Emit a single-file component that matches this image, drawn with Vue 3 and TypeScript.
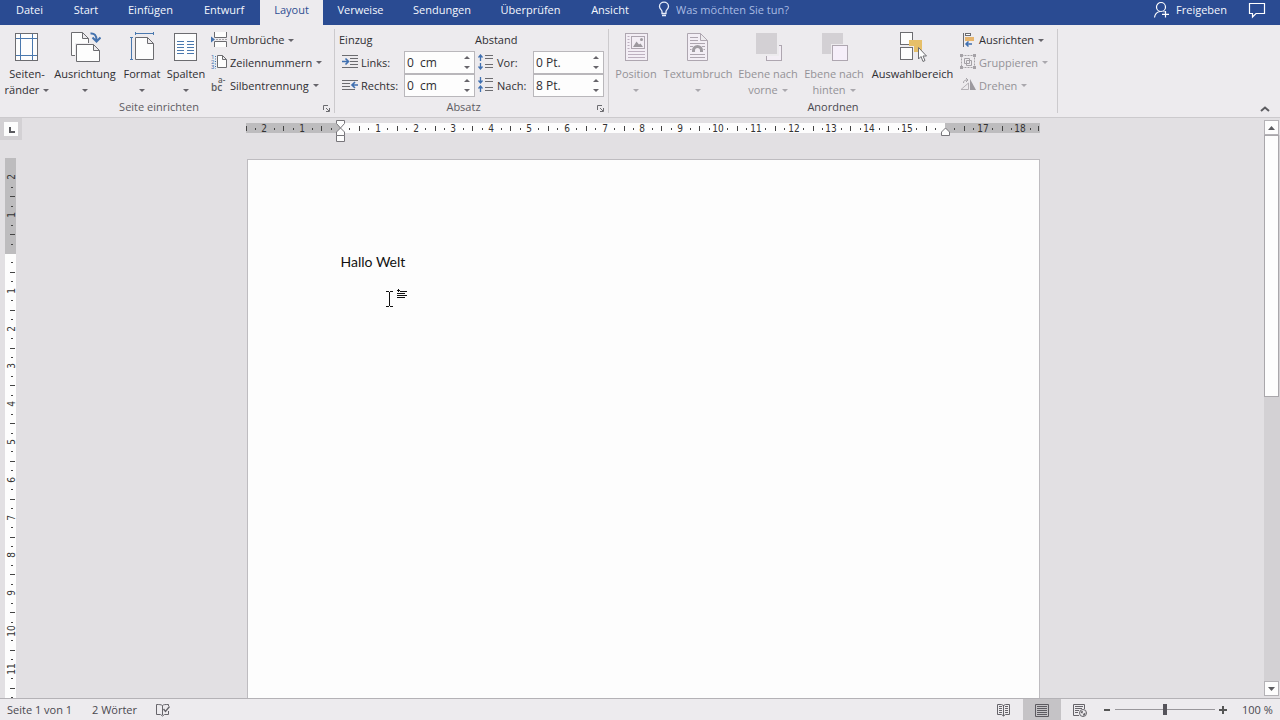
<script setup lang="ts">
import { ref } from 'vue'

const tabs = ['Datei', 'Start', 'Einfügen', 'Entwurf', 'Layout', 'Verweise', 'Sendungen', 'Überprüfen', 'Ansicht']
const activeTab = ref('Layout')

const indentLeft = ref('0  cm')
const indentRight = ref('0  cm')
const spaceBefore = ref('0 Pt.')
const spaceAfter = ref('8 Pt.')
const zoom = ref(50)
const question = ref('')

interface Mark {
  pos: number
  kind: 'num' | 'half' | 'dot'
  label: string
}

const CM = 37.8

// Ruler marks in quarter-centimetre steps around the zero point.
function marks(zero: number, from: number, to: number, skip: number[]): Mark[] {
  const out: Mark[] = []
  for (let q = from; q <= to; q++) {
    if (q === 0) continue
    const pos = Math.round(zero + (q * CM) / 4)
    if (q % 4 === 0) {
      const n = Math.abs(q / 4)
      if (!skip.includes(n)) out.push({ pos, kind: 'num', label: String(n) })
    } else {
      out.push({ pos, kind: q % 2 === 0 ? 'half' : 'dot', label: '' })
    }
  }
  return out
}

const horizontal = marks(94, -9, 73, [16])
const vertical = marks(95, -8, 47, [])
</script>

<template>
  <div class="word">
    <header class="tabbar">
      <nav class="tabs">
        <button
          v-for="t in tabs"
          :key="t"
          type="button"
          class="tab"
          :class="{ active: t === activeTab }"
          @click="activeTab = t"
        >{{ t }}</button>
      </nav>
      <label class="tell">
        <svg width="14" height="18" viewBox="0 0 14 18" fill="none" stroke="#e8eefb" stroke-width="1.3">
          <path d="M5 12.5V10.5C5 9 2.5 8 2.5 5.5a4.5 4.3 0 0 1 9 0C11.500 8 9 9 9 10.500V12.500ZM5 14.500H9" />
        </svg>
        <input v-model="question" type="text" placeholder="Was möchten Sie tun?" aria-label="Was möchten Sie tun?" />
      </label>
      <button type="button" class="share">
        <svg width="18" height="18" viewBox="0 0 18 18" fill="none" stroke="#fff" stroke-width="1.2">
          <circle cx="8" cy="6" r="4.500" />
          <path d="M1.500 16.500C2 13 4 11 7 10.500M10.500 10.500L11.500 11M12.500 10V16.500M9 13.300H16" />
        </svg>
        <span>Freigeben</span>
      </button>
      <button type="button" class="comment" aria-label="Kommentare">
        <svg width="18" height="18" viewBox="0 0 18 18" fill="none" stroke="#fff" stroke-width="1.2">
          <path d="M1.500 2.500H16.500V12.500H8L4.500 16V12.500H1.500Z" />
        </svg>
      </button>
    </header>

    <section class="ribbon">
      <div class="group page-setup">
        <div class="body">
          <button type="button" class="big">
            <svg width="32" height="32" viewBox="0 0 32 32" fill="none">
              <rect x="4.500" y="2.500" width="22" height="27" fill="#fdfdfd" stroke="#6c6c70" />
              <path d="M9.500 3V29M21.500 3V29M5 7.500H26M5 24.500H26" stroke="#4a78ae" />
            </svg>
            <span>Seiten-</span>
            <span>ränder<i class="caret"></i></span>
          </button>
          <button type="button" class="big">
            <svg width="32" height="32" viewBox="0 0 32 32" fill="#fdfdfd" stroke="#6c6c70">
              <path d="M2.500 1.500H13.500L19.500 7.500V24.500H2.500ZM13.500 1.500V7.500H19.500" />
              <path d="M6 12H25V15L31 20V31H6Z" fill="#edebee" stroke="none" />
              <path d="M7.500 13.500H24.500L30.500 19.500V30.500H7.500ZM24.500 13.500V19.500H30.500" />
              <path d="M21.500 2.500C25.500 2 27.500 4.500 27.500 9M23.500 6.500L27.500 10.500L31.500 6.500" fill="none" stroke="#4472ae" stroke-width="2" />
            </svg>
            <span>Ausrichtung</span>
            <span><i class="caret solo"></i></span>
          </button>
          <button type="button" class="big">
            <svg width="32" height="32" viewBox="0 0 32 32" fill="#fdfdfd" stroke="#6c6c70">
              <path d="M9.500 6.500H21.500L27.500 12.500V28.500H9.500ZM21.500 6.500V12.500H27.500" />
              <path d="M9.500 1V4M27.500 1V4M9.500 2.500H27.500M4 6.500H7M4 28.500H7M5.500 6.500V28.500" stroke="#4a78ae" />
            </svg>
            <span>Format</span>
            <span><i class="caret solo"></i></span>
          </button>
          <button type="button" class="big">
            <svg width="32" height="32" viewBox="0 0 32 32" fill="none">
              <rect x="4.500" y="2.500" width="22" height="27" fill="#fdfdfd" stroke="#6c6c70" />
              <path d="M7 10.500H14M7 13.500H14M7 16.500H14M7 19.500H14M7 22.500H14M17 10.500H24M17 13.500H24M17 16.500H24M17 19.500H24M17 22.500H24" stroke="#4a78ae" />
            </svg>
            <span>Spalten</span>
            <span><i class="caret solo"></i></span>
          </button>
          <div class="stack">
            <button type="button" class="small">
              <svg width="17" height="17" viewBox="0 0 17 17" fill="#fdfdfd" stroke="#6c6c70">
                <path d="M3.500 0V5.500H15.500V0M3.500 15V9.500H15.500V15" />
                <path d="M5 7.500H16" stroke="#a5a3a8" stroke-dasharray="2 1" />
                <path d="M0 4.500L4 7.500L0 10.500Z" fill="#4472ae" stroke="none" />
              </svg>
              <span>Umbrüche</span><i class="caret"></i>
            </button>
            <button type="button" class="small">
              <svg width="17" height="17" viewBox="0 0 17 17" fill="#fdfdfd" stroke="#6c6c70">
                <path d="M6.500 1.500H11.500L15.500 5.500V13.500H6.500ZM11.500 1.500V5.500H15.500" />
                <g fill="#4472ae" stroke="none" font-size="6" font-family="Roboto, sans-serif">
                  <text x="0" y="5">1</text>
                  <text x="0" y="10">2</text>
                  <text x="0" y="15">3</text>
                </g>
                <path d="M4.500 2V15" stroke="#4472ae" stroke-dasharray="1 1.500" />
              </svg>
              <span>Zeilennummern</span><i class="caret"></i>
            </button>
            <button type="button" class="small">
              <svg class="hyphen" width="17" height="17" viewBox="0 0 17 17">
                <text x="0" y="14" font-size="10">bc</text>
                <text x="7" y="6" font-size="8">a-</text>
              </svg>
              <span>Silbentrennung</span><i class="caret"></i>
            </button>
          </div>
        </div>
        <footer class="caption">
          <span>Seite einrichten</span>
          <button type="button" class="launcher" aria-label="Seite einrichten öffnen">
            <svg width="7" height="7" viewBox="0 0 7 7" fill="none" stroke="#6c6c70"><path d="M.5 5V.5H5M3 3L6 6M6.500 3V6.500H3" /></svg>
          </button>
        </footer>
      </div>

      <div class="group paragraph">
        <div class="fields">
          <span class="head">Einzug</span>
          <span class="head">Abstand</span>

          <label class="name" for="in-left">
            <svg width="17" height="17" viewBox="0 0 17 17" fill="none" stroke="#6c6c70">
              <path d="M0 1.500H16M8 4.500H16M8 7.500H16M8 10.500H16M0 13.500H16" />
              <path d="M0 7.500H6M3.500 4.500L6.500 7.500L3.500 10.500" stroke="#3f6fb0" stroke-width="1.600" />
            </svg>Links:
          </label>
          <span class="spin">
            <input id="in-left" v-model="indentLeft" type="text" />
            <span class="arrows"><button type="button" aria-label="Links erhöhen" class="up"></button><button type="button" aria-label="Links verringern" class="down"></button></span>
          </span>
          <label class="name second" for="sp-before">
            <svg width="17" height="17" viewBox="0 0 17 17" fill="none" stroke="#6c6c70">
              <path d="M7 1.500H15M7 4.500H15M7 10.500H15M7 13.500H15" />
              <path d="M2.500 1V7M.5 3.500L2.500 1L4.500 3.500M2.500 9V15M.5 12.500L2.500 15L4.500 12.500" stroke="#3f6fb0" stroke-width="1.300" />
            </svg>Vor:
          </label>
          <span class="spin">
            <input id="sp-before" v-model="spaceBefore" type="text" />
            <span class="arrows"><button type="button" aria-label="Vor erhöhen" class="up"></button><button type="button" aria-label="Vor verringern" class="down"></button></span>
          </span>

          <label class="name" for="in-right">
            <svg width="17" height="17" viewBox="0 0 17 17" fill="none" stroke="#6c6c70">
              <path d="M0 3.500H16M0 6.500H8M0 9.500H8M0 12.500H13" />
              <path d="M16 8H10M13 5L10 8L13 11" stroke="#3f6fb0" stroke-width="1.600" />
            </svg>Rechts:
          </label>
          <span class="spin">
            <input id="in-right" v-model="indentRight" type="text" />
            <span class="arrows"><button type="button" aria-label="Rechts erhöhen" class="up"></button><button type="button" aria-label="Rechts verringern" class="down"></button></span>
          </span>
          <label class="name second" for="sp-after">
            <svg width="17" height="17" viewBox="0 0 17 17" fill="none" stroke="#6c6c70">
              <path d="M7 1.500H15M7 4.500H15M7 10.500H15M7 13.500H15" />
              <path d="M2.500 0V6M.5 3.500L2.500 6L4.500 3.500M2.500 9V15M.5 11.500L2.500 9L4.500 11.500" stroke="#3f6fb0" stroke-width="1.300" />
            </svg>Nach:
          </label>
          <span class="spin">
            <input id="sp-after" v-model="spaceAfter" type="text" />
            <span class="arrows"><button type="button" aria-label="Nach erhöhen" class="up"></button><button type="button" aria-label="Nach verringern" class="down"></button></span>
          </span>
        </div>
        <footer class="caption">
          <span>Absatz</span>
          <button type="button" class="launcher" aria-label="Absatz öffnen">
            <svg width="7" height="7" viewBox="0 0 7 7" fill="none" stroke="#6c6c70"><path d="M.5 5V.5H5M3 3L6 6M6.500 3V6.500H3" /></svg>
          </button>
        </footer>
      </div>

      <div class="group arrange">
        <div class="body">
          <button type="button" class="big off" disabled>
            <svg width="32" height="32" viewBox="0 0 32 32" fill="none" stroke="#aea6b0">
              <rect x="5.500" y="2.500" width="22" height="27" fill="#f3eef5" />
              <rect x="11.500" y="5.500" width="13" height="12" />
              <path d="M7.500 5.500H9.500M7.500 8.500H9.500M7.500 11.500H9.500M7.500 14.500H9.500M7.500 17.500H9.500M8 20.500H25M8 23.500H25M8 26.500H25" stroke="#bdb0bf" />
              <path d="M13 16L16.500 10.500L19 13.500L20.500 12.500L23 16Z" fill="#9d999f" stroke="none" />
              <circle cx="21.500" cy="8.500" r="1.500" fill="#9d999f" stroke="none" />
            </svg>
            <span>Position</span>
            <span><i class="caret solo"></i></span>
          </button>
          <button type="button" class="big off" disabled>
            <svg width="32" height="32" viewBox="0 0 32 32" fill="none" stroke="#aea6b0">
              <path d="M5.500 2.500H18.500L25.500 9.500V29.500H5.500ZM18.500 2.500V9.500H25.500" fill="#f3eef5" />
              <path d="M8 6.500H16M8 9.500H16M8 12.500H23M8 15.500H11M20 15.500H23M8 18.500H9.500M21.500 18.500H23M8 23.500H23M8 26.500H23" />
              <path d="M11.500 21V19.500A4 4 0 0 1 19.500 19.500V21" stroke="#a09ca2" stroke-width="3" />
            </svg>
            <span>Textumbruch</span>
            <span><i class="caret solo"></i></span>
          </button>
          <button type="button" class="big off" disabled>
            <svg width="32" height="32" viewBox="0 0 32 32">
              <rect x="14.500" y="14.500" width="15" height="15" fill="#f3eef5" stroke="#aea6b0" />
              <path d="M3 1H27V25H3Z" fill="#edebee" />
              <rect x="4" y="2" width="21" height="21" fill="#d3d0d4" />
            </svg>
            <span>Ebene nach</span>
            <span>vorne<i class="caret"></i></span>
          </button>
          <button type="button" class="big off" disabled>
            <svg width="32" height="32" viewBox="0 0 32 32">
              <rect x="4" y="2" width="21" height="21" fill="#d3d0d4" />
              <rect x="13" y="13" width="18" height="18" fill="#edebee" />
              <rect x="14.500" y="14.500" width="15" height="15" fill="#f6effa" stroke="#aea6b0" />
            </svg>
            <span>Ebene nach</span>
            <span>hinten<i class="caret"></i></span>
          </button>
          <button type="button" class="big">
            <svg width="32" height="32" viewBox="0 0 32 32" fill="#fdfdfd" stroke="#6c6c70">
              <rect x="3.500" y="1.500" width="12" height="12" />
              <path d="M12 9H25V21H17V15H12Z" fill="#e6bf68" stroke="none" />
              <rect x="3.500" y="16.500" width="12" height="12" />
              <path d="M21.500 16.500V28L24 25.500L26 30.500L28 29.500L26 25H29.500Z" />
            </svg>
            <span>Auswahlbereich</span>
          </button>
          <div class="stack">
            <button type="button" class="small">
              <svg width="17" height="17" viewBox="0 0 17 17" fill="none" stroke="#6c6c70">
                <path d="M3.500 1V15" />
                <rect x="5.500" y="1.500" width="5" height="2" fill="#fdfdfd" />
                <rect x="5" y="5" width="9" height="4" fill="#e6b46c" stroke="none" />
                <path d="M12 12H6M8.500 9.500L6 12L8.500 14.500" stroke="#3f6fb0" stroke-width="1.500" />
              </svg>
              <span>Ausrichten</span><i class="caret"></i>
            </button>
            <button type="button" class="small off" disabled>
              <svg width="17" height="17" viewBox="0 0 17 17" fill="none" stroke="#a5a2a7">
                <path d="M1.500 1.500H14.500V13.500H1.500Z" stroke-dasharray="2 1" />
                <path d="M4.500 4.500H9.500V9.500H4.500ZM6.500 6.500H11.500V11.500H6.500Z" />
                <path d="M0 0H3V3H0ZM13 0H16V3H13ZM0 12H3V15H0ZM13 12H16V15H13Z" fill="#a5a2a7" stroke="none" />
              </svg>
              <span>Gruppieren</span><i class="caret"></i>
            </button>
            <button type="button" class="small off" disabled>
              <svg width="17" height="17" viewBox="0 0 17 17" fill="none" stroke="#b5b2b7">
                <path d="M1 12.500L8.500 6V12.500Z" />
                <path d="M10 2V13H16Z" fill="#9c999e" stroke="none" />
                <path d="M3.500 6C3.500 3.500 5 3 7.500 3M6 1L8 3L6 5" stroke="#a5a2a7" />
              </svg>
              <span>Drehen</span><i class="caret"></i>
            </button>
          </div>
        </div>
        <footer class="caption strong"><span>Anordnen</span></footer>
      </div>
      <button type="button" class="collapse" aria-label="Menüband reduzieren">
        <svg width="10" height="6" viewBox="0 0 10 6" fill="none" stroke="#5c5c60" stroke-width="2"><path d="M1 5L5 1.500L9 5" /></svg>
      </button>
    </section>

    <main class="workspace">
      <aside class="side">
        <button type="button" class="corner" aria-label="Tabstopp">
          <svg width="14" height="14" viewBox="0 0 14 14"><path d="M6 5V10H11" fill="none" stroke="#5c5c60" stroke-width="2" /></svg>
        </button>
        <div class="vruler">
          <svg width="11" height="540" viewBox="0 0 11 540">
            <rect width="11" height="540" fill="#fdfdfd" />
            <rect width="11" height="96" fill="#bdbcbe" />
            <template v-for="(m, i) in vertical" :key="i">
              <text v-if="m.kind === 'num'" class="mark" :transform="`translate(10 ${m.pos}) rotate(-90)`">{{ m.label }}</text>
              <rect v-else-if="m.kind === 'half'" x="5" :y="m.pos" width="5" height="1" fill="#444" />
              <rect v-else x="6" :y="m.pos" width="2" height="1" fill="#444" />
            </template>
          </svg>
        </div>
      </aside>

      <div class="canvas">
        <svg class="hruler" width="794" height="24" viewBox="0 0 794 24">
          <rect y="5" width="794" height="10" fill="#bdbcbe" />
          <rect x="94" y="5" width="605" height="10" fill="#fdfdfd" />
          <rect x="0" y="8" width="1" height="5" fill="#444" />
          <rect x="792" y="8" width="1" height="5" fill="#444" />
          <template v-for="(m, i) in horizontal" :key="i">
            <text v-if="m.kind === 'num'" class="mark" :x="m.pos" y="14">{{ m.label }}</text>
            <rect v-else-if="m.kind === 'half'" :x="m.pos" y="8" width="1" height="5" fill="#444" />
            <rect v-else :x="m.pos" y="10" width="1" height="2" fill="#444" />
          </template>
          <g fill="#fdfdfd" stroke="#77757a">
            <path d="M90.500 2.500H98.500V5.500L94.500 10L90.500 5.500Z" />
            <path d="M94.500 10L98.500 14V17.500H90.500V14Z" />
            <path d="M90.500 17.500H98.500V23.500H90.500Z" />
            <path d="M699.500 10L703.500 14V17.500H695.500V14Z" />
          </g>
        </svg>
        <article class="page">
          <p>Hallo Welt</p>
          <svg class="cursor" width="20" height="20" viewBox="0 0 20 20" fill="none" stroke="#111">
            <path d="M0 3.500H3M4 3.500H7M3.500 4V18M0 18.500H3M4 18.500H7" />
            <path d="M11 2.500H14M12.500 1V4M14 3.500H21M11 5.500H19M11 7.500H21M11 9.500H19" />
          </svg>
        </article>
      </div>

      <div class="scroll">
        <button type="button" aria-label="Nach oben"><svg width="7" height="4" viewBox="0 0 7 4"><path d="M0 4L3.500 0L7 4Z" fill="#5c5c60" /></svg></button>
        <div class="track"><div class="thumb"></div></div>
        <button type="button" aria-label="Nach unten"><svg width="7" height="4" viewBox="0 0 7 4"><path d="M0 0L3.500 4L7 0Z" fill="#5c5c60" /></svg></button>
      </div>
    </main>

    <footer class="status">
      <span class="pages">Seite 1 von 1</span>
      <span class="words">2 Wörter</span>
      <button type="button" class="proof" aria-label="Rechtschreibung">
        <svg width="16" height="14" viewBox="0 0 16 14" fill="none" stroke="#66646a">
          <path d="M7.500 2.500C6 1.500 4 1.500 1.500 1.500V11.500H5.500L7.500 13L9.500 11.500H13.500V8M7.500 2.500V12M7.500 2.500C8.500 1.500 10 1.500 13.500 1.500V3" />
          <path d="M8.500 6L10.500 8.500L14.500 3.500" stroke-width="1.400" />
        </svg>
      </button>
      <button type="button" class="view" aria-label="Lesemodus">
        <svg width="14" height="14" viewBox="0 0 14 14" fill="none" stroke="#66646a">
          <path d="M.5 1.500H4.500L6.500 2.500L8.500 1.500H12.500V11.500H8.500L6.500 13L4.500 11.500H.5ZM6.500 2V13M2 3.500H5M2 5.500H5M2 7.500H5M2 9.500H5M8 3.500H11M8 5.500H11M8 7.500H11M8 9.500H11" />
        </svg>
      </button>
      <button type="button" class="view on" aria-label="Seitenlayout">
        <svg width="14" height="14" viewBox="0 0 14 14" fill="none" stroke="#5c5a60">
          <path d="M.5 1.500H13.500V13.500H.5ZM2 3.500H12M2 5.500H12M2 7.500H12M2 9.500H12M2 11.500H12" />
        </svg>
      </button>
      <button type="button" class="view" aria-label="Weblayout">
        <svg width="14" height="14" viewBox="0 0 14 14" fill="none" stroke="#66646a">
          <path d="M6 12.500H.5V1.500H11.500V6M2 3.500H10M2 5.500H9M2 7.500H6M2 9.500H5" />
          <circle cx="10" cy="10" r="3.500" fill="#edebee" />
          <path d="M7.500 8.500L10 8L9.500 10.500L8 10ZM10 11L12.500 9.500L12 12L10.500 13Z" fill="#66646a" stroke="none" />
        </svg>
      </button>
      <div class="zoom">
        <button type="button" aria-label="Verkleinern"><svg width="8" height="8" viewBox="0 0 8 8"><path d="M1 4H7" stroke="#555" stroke-width="2" /></svg></button>
        <input v-model="zoom" type="range" min="0" max="100" aria-label="Zoom" />
        <button type="button" aria-label="Vergrößern"><svg width="8" height="8" viewBox="0 0 8 8"><path d="M0 4H8M4 0V8" stroke="#555" stroke-width="2" /></svg></button>
      </div>
      <span class="percent">100 %</span>
    </footer>
  </div>
</template>

<style>
body {
  margin: 0;
}
</style>

<style scoped>
.word {
  display: flex;
  flex-direction: column;
  height: 100vh;
  overflow: hidden;
  font: 11px/16px "Open Sans", "Noto Sans", sans-serif;
  color: #2f2e32;
  background: #e2e0e3;
}
svg {
  display: block;
  flex: none;
}
button {
  margin: 0;
  padding: 0;
  border: 0;
  background: none;
  font: inherit;
  color: inherit;
  white-space: nowrap;
}
input {
  font: inherit;
  color: inherit;
}

.tabbar {
  display: flex;
  height: 25px;
  background: #2a4b92;
  color: #f4f7fd;
}
.tabs {
  display: grid;
  grid-template-columns: 59px 54px 75px 72px 63px 75px 88px 89px 70px;
}
.tab,
.share,
.comment,
.tell {
  height: 25px;
  padding-bottom: 5px;
  line-height: 20px;
  display: flex;
  align-items: center;
  justify-content: center;
}
.tab.active {
  background: #edebee;
  color: #2f4e92;
}
.tell {
  box-sizing: border-box;
  padding-left: 12px;
  gap: 5px;
}
.tell input {
  width: 150px;
  padding: 0;
  border: 0;
  background: none;
  outline: none;
}
.tell input::placeholder {
  color: #a9bbe2;
  opacity: 1;
}
.share {
  margin-left: auto;
  gap: 5px;
}
.comment {
  padding-right: 14px;
  margin-left: 21px;
}

.ribbon {
  display: flex;
  height: 92px;
  background: #edebee;
  border-bottom: 1px solid #cccacd;
}
.group {
  display: flex;
  flex-direction: column;
  box-sizing: border-box;
  margin: 4px 0;
  border-right: 1px solid #cccacd;
}
.page-setup {
  width: 335px;
}
.paragraph {
  width: 274px;
}
.arrange {
  width: 449px;
}
.body {
  display: grid;
  height: 70px;
}
.page-setup .body {
  grid-template-columns: 54px 62px 52px 43px 1fr;
}
.arrange .body {
  grid-template-columns: 54px 70px 70px 62px 95px 1fr;
}
.big {
  display: flex;
  flex-direction: column;
  align-items: center;
  justify-content: flex-start;
  padding-top: 2px;
}
.page-setup .big:nth-child(4) {
  padding-right: 7px;
}
.big svg {
  margin-bottom: 3px;
}
.big span {
  display: flex;
  align-items: center;
  height: 16px;
}
.off {
  color: #949297;
}
.caret {
  margin-left: 4px;
  border: 3px solid transparent;
  border-top-color: #66646a;
  border-bottom: 0;
}
.caret.solo {
  margin-left: 0;
}
.off .caret {
  border-top-color: #aaa8ad;
}
.stack {
  display: grid;
  grid-template-rows: 22px 23px 23px;
}
.small {
  display: flex;
  align-items: center;
}
.small span {
  margin-left: 2px;
}
.hyphen {
  overflow: visible;
  fill: #5c5c60;
  font-family: "Open Sans", sans-serif;
  font-weight: 600;
}
.caption {
  display: flex;
  flex: 1;
  align-items: flex-end;
  color: #5e5c62;
}
.caption span {
  flex: 1;
  text-align: center;
  line-height: 12px;
}
.caption.strong {
  color: #4a484e;
}
.launcher {
  width: 16px;
  padding: 0 0 1px 5px;
}
.fields {
  display: grid;
  grid-template: 22px 23px 23px / 69px 71px 58px 71px;
  height: 70px;
}
.head {
  grid-column: span 2;
  padding-left: 4px;
  line-height: 22px;
}
.head + .head {
  padding-left: 0;
}
.name {
  display: flex;
  align-items: center;
  gap: 2px;
  padding-left: 7px;
  white-space: nowrap;
}
.name.second {
  padding-left: 3px;
}
.spin {
  display: flex;
  border: 1px solid #b9b7bb;
  background: #fdfdfd;
}
.spin input {
  flex: 1;
  min-width: 0;
  padding: 0 2px;
  border: 0;
  background: none;
  outline: none;
  font-size: 12px;
}
.arrows {
  display: grid;
  width: 15px;
}
.arrows button {
  display: grid;
  place-items: center;
}
.arrows button::after {
  content: "";
  border: 3px solid transparent;
}
.up::after {
  border-bottom-color: #66646a !important;
  border-top: 0 !important;
}
.down::after {
  border-top-color: #66646a !important;
  border-bottom: 0 !important;
}
.collapse {
  align-self: flex-end;
  margin-left: auto;
  padding: 0 10px 5px 0;
}

.workspace {
  display: flex;
  flex: 1;
  min-height: 0;
}
.side {
  display: flex;
  flex-direction: column;
  width: 22px;
}
.corner {
  padding: 4px;
  background: #d3d1d4;
}
.corner svg {
  background: #fdfdfd;
}
.vruler {
  flex: 1;
  min-height: 0;
  margin-top: 18px;
  padding-left: 5px;
  overflow: hidden;
}
.mark {
  font: 10px "DejaVu Sans Condensed", "DejaVu Sans", sans-serif;
  text-anchor: middle;
  fill: #333;
}
.canvas {
  display: flex;
  flex: 1;
  flex-direction: column;
  align-items: center;
  overflow: hidden;
}
.page {
  position: relative;
  flex: 1;
  box-sizing: border-box;
  width: 793px;
  margin-top: 17px;
  padding: 92px 93px 0;
  border: 1px solid #bebcc0;
  border-bottom: 0;
  background: #fdfdfd;
  color: #111;
}
.page p {
  margin: 0;
  font: 14px/20px Lato, sans-serif;
}
.cursor {
  position: absolute;
  left: 138px;
  top: 128px;
  overflow: visible;
}
.scroll {
  display: flex;
  flex-direction: column;
  width: 16px;
  padding: 2px 0;
  box-sizing: border-box;
}
.scroll button {
  display: grid;
  place-items: center;
  height: 15px;
  margin-right: 1px;
  border: 1px solid #b4b2b6;
  background: #fdfdfd;
}
.track {
  flex: 1;
  background: #d3d1d4;
}
.thumb {
  box-sizing: border-box;
  height: 48%;
  margin-right: 1px;
  border: 1px solid #a9a7ab;
  background: #fdfdfd;
}

.status {
  display: flex;
  align-items: center;
  height: 21px;
  border-top: 1px solid #b4b2b6;
  background: #edebee;
  color: #4a484e;
}
.pages {
  width: 85px;
  padding-left: 7px;
}
.words {
  width: 63px;
}
.proof {
  margin-right: auto;
}
.view {
  display: grid;
  place-items: center;
  width: 38px;
  height: 21px;
}
.view.on {
  background: #c5c3c6;
}
.zoom {
  display: flex;
  align-items: center;
  gap: 4px;
  margin-left: 4px;
}
.zoom input {
  width: 100px;
  height: 16px;
  margin: 0;
  appearance: none;
  background: linear-gradient(#99979b, #99979b) center / 100% 1px no-repeat;
}
.zoom input::-webkit-slider-thumb {
  appearance: none;
  width: 4px;
  height: 11px;
  background: #55535a;
}
.percent {
  width: 38px;
  padding-left: 15px;
  white-space: nowrap;
}
</style>
